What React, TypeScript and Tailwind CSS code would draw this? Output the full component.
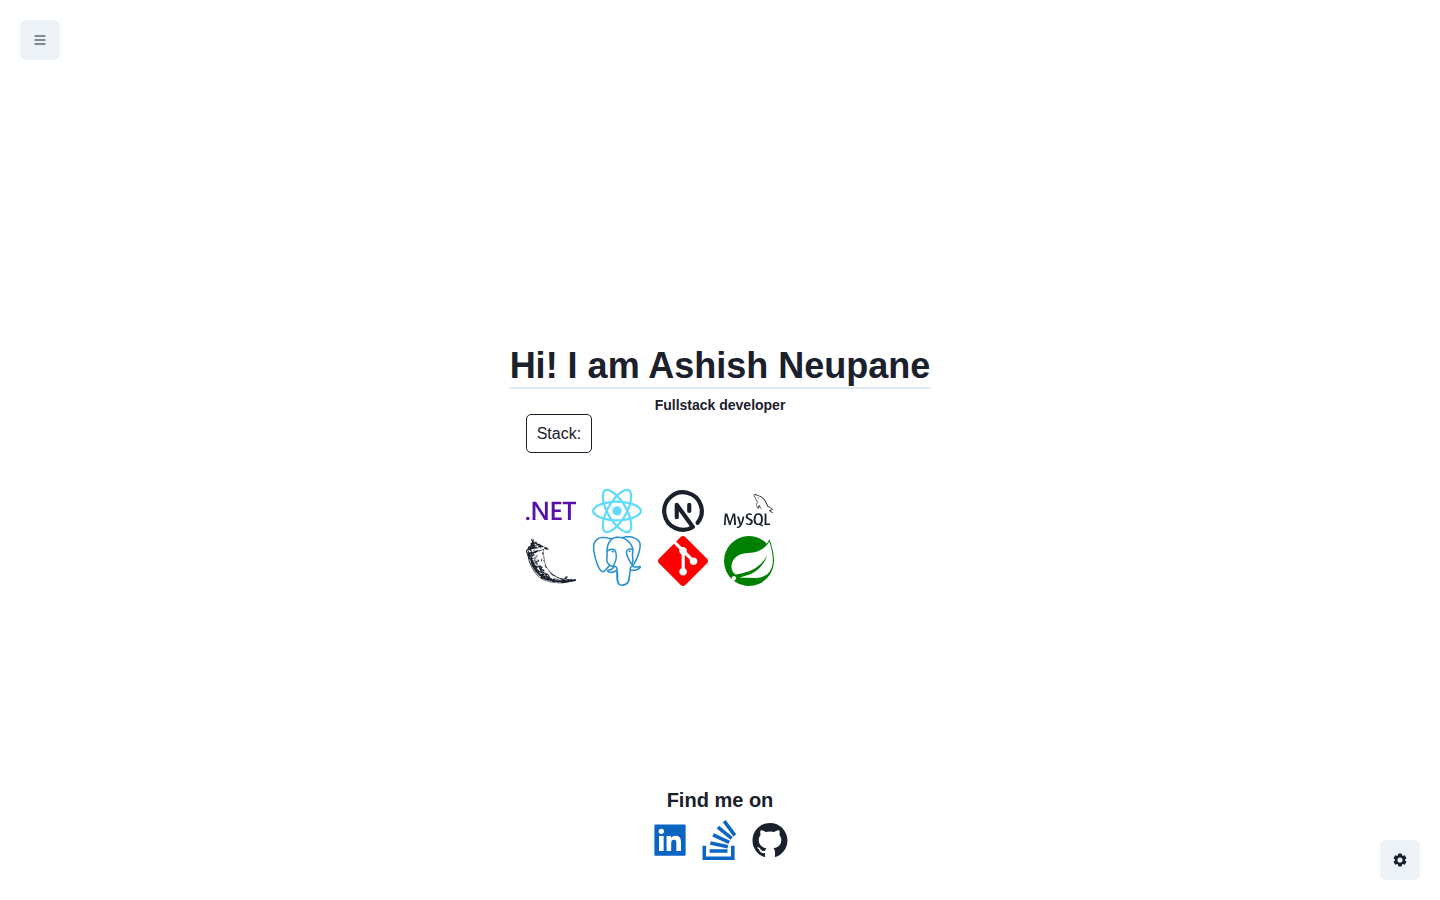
import { SiDotnet, SiReact, SiMysql, SiFlask, SiPostgresql, SiGit, SiSpring } from "react-icons/si";
import { TbBrandNextjs } from "react-icons/tb";
import { AiFillGithub, AiFillLinkedin } from "react-icons/ai";
import { BsList, BsStackOverflow } from "react-icons/bs";

const stack = [
  { name: ".NET", Icon: SiDotnet, color: "text-[#5711a8]" },
  { name: "React", Icon: SiReact, color: "text-[#61dafb]" },
  { name: "Next.js", Icon: TbBrandNextjs, color: "text-[#1a202c]" },
  { name: "MySQL", Icon: SiMysql, color: "text-[#1a202c]" },
  { name: "Flask", Icon: SiFlask, color: "text-[#1a202c]" },
  { name: "PostgreSQL", Icon: SiPostgresql, color: "text-[#2490d0]" },
  { name: "Git", Icon: SiGit, color: "text-[#ff0000]" },
  { name: "Spring", Icon: SiSpring, color: "text-[#008000]" },
];

const toothAngles = [0, 60, 120, 180, 240, 300];

function GearIcon() {
  return (
    <svg viewBox="-7 -7 14 14" className="size-3.5" fill="currentColor">
      <circle r="3.85" fill="none" stroke="currentColor" strokeWidth="2.5" />
      {toothAngles.map((angle) => (
        <rect key={angle} x="-2" y="-6.5" width="4" height="3.6" rx="0.9" transform={`rotate(${angle})`} />
      ))}
    </svg>
  );
}

export default function App() {
  return (
    <div className="flex h-screen justify-between bg-white p-5 font-['Liberation_Sans',Arial,sans-serif] text-[#1a202c]">
      <button aria-label="Menu" className="flex size-10 items-center justify-center self-start rounded-md bg-[#edf2f7]">
        <BsList size={16} />
      </button>

      <main className="flex flex-col items-center pt-[324px]">
        <h1 className="h-[45px] border-b-2 border-[#e2e8f0] text-4xl leading-[43px] font-bold whitespace-nowrap">
          Hi! I am Ashish Neupane
        </h1>
        <p className="mt-2 h-[17px] text-sm leading-[17px] font-bold">Fullstack developer</p>
        <section className="w-full px-4">
          <div className="flex h-[39px] w-[66px] items-center rounded-[5px] border border-[#1a202c] pl-2.5 text-base leading-none">
            Stack:
          </div>
          <div className="mt-[33px] grid w-max grid-cols-4 gap-x-4">
            {stack.map(({ name, Icon, color }) => (
              <Icon key={name} size={50} className={color} />
            ))}
          </div>
        </section>
        <footer className="mt-auto flex flex-col items-center">
          <h2 className="text-xl leading-6 font-bold">Find me on</h2>
          <div className="mt-2 mb-5 flex gap-2.5 text-[#0a66c2]">
            <AiFillLinkedin size={40} />
            <BsStackOverflow size={40} />
            <AiFillGithub size={40} className="text-[#1a202c]" />
          </div>
        </footer>
      </main>

      <button aria-label="Settings" className="flex size-10 items-center justify-center self-end rounded-md bg-[#edf2f7]">
        <GearIcon />
      </button>
    </div>
  );
}
